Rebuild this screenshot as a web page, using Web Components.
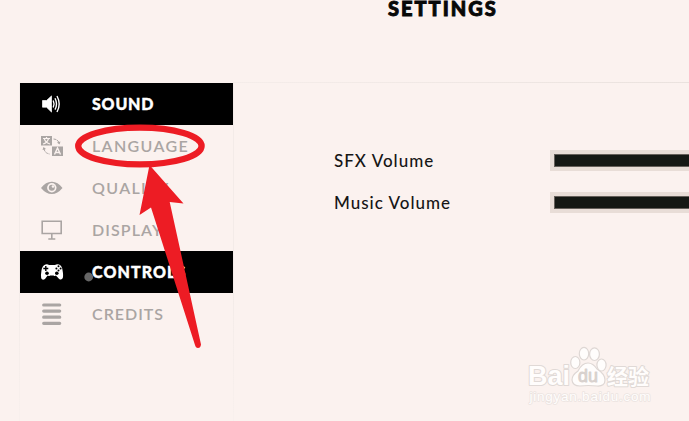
<!DOCTYPE html>
<html lang="en"><head><meta charset="utf-8"><title>Settings</title>
<style>
html,body{margin:0;height:100%;overflow:hidden;background:#fbf2ef}
</style></head><body>
<settings-page></settings-page>
<script>
const ICONS = {
 sound:`<path d="M1.500 6.500h4l5-4.600v16.200l-5-4.900h-4z" fill="currentColor" stroke="currentColor" stroke-width=".7"/><path d="M12.200 6.500q1.700 3.500 0 7M14 4.200q3 5.800 0 11.500M16 2q4.400 8 0 16" fill="none" stroke="currentColor" stroke-width="1.400"/>`,
 language:`<path d="M0 0h11v9.500H0z" fill="currentColor"/><path d="M2 2.500h7M5.500 1v1.500M7.500 2.700Q6 7 2 8M3.300 3Q5 7 9 8" stroke="#fbf2ef" fill="none" stroke-width="1.200"/><path d="M11 10.500h11V20H11z" fill="currentColor"/><path d="M13.500 18.500l3-6.500 3 6.500M14.700 16.500h3.700" stroke="#fbf2ef" fill="none" stroke-width="1.400"/><path d="M12.500 3q4 .3 5.300 3.300M3 12.500q.5 4.500 5.500 5.500" stroke="currentColor" fill="none" stroke-width="1" stroke-dasharray="3 .7"/><path d="M19.500 5.500l-1 3-2.500-2zM1.500 14l1-3 2.500 2z" fill="currentColor"/>`,
 quality:`<path d="M0 10Q5 3.500 10.800 3.700 16.500 3.500 21.500 10 16.500 16 10.800 16 5 16 0 10z" fill="currentColor"/><circle cx="10.800" cy="9.800" r="4.700" fill="#fbf2ef"/><circle cx="10.800" cy="9.800" r="3" fill="currentColor"/><circle cx="12" cy="8.500" r="1.300" fill="#fbf2ef"/>`,
 display:`<path d="M1.200 1.200h19v12.300h-19zM10.800 14v5M7.300 19h7" fill="none" stroke="currentColor" stroke-width="1.600"/>`,
 controls:`<path d="M4.500 2.500Q6.500 1.800 8 3h6Q16 1.800 18 2.600q3 1.300 3.500 5.500 1 5.500.3 8-1.300 2.600-3.900.6l-3-3.100q-1 1-2.300-.2h-3.500q-1.200 1.200-2.500.2L4 16.900q-2.600 1.800-3.800-.6-.6-3 .3-8Q1.200 3.500 4.500 2.500z" fill="currentColor"/><path d="M4.800 4v5M2.300 6.500h5" stroke="#000" stroke-width="1.400"/><circle cx="6" cy="11.200" r="1.800"/><circle cx="15.800" cy="11.200" r="1.800"/><g><circle cx="17.500" cy="4.300" r="1"/><circle cx="17.500" cy="8.500" r="1"/><circle cx="15.400" cy="6.400" r="1"/><circle cx="19.600" cy="6.400" r="1"/></g>`,
 credits:`<path d="M2.700 1h16M2.700 7.100h16M2.700 13.200h16M2.700 19.300h16" stroke="currentColor" stroke-width="3.200" stroke-linecap="round"/>`
};
const define = (name, html, setup) => customElements.define(name, class extends HTMLElement {
  constructor(){ super(); this.attachShadow({mode:'open'}).innerHTML = html; }
  connectedCallback(){ if(setup) setup(this); }
});
define('menu-item', `<style>
:host{display:grid;grid-template-columns:72px 1fr;align-items:center;height:42px;color:#aaa5a3;font:600 16px/20px Lato,sans-serif;letter-spacing:1.35px}
:host([active]){background:#000;color:#fff;font-weight:900;letter-spacing:.9px}
:host([active]) span{-webkit-text-stroke:.4px #fff}
svg{display:block;width:22px;height:21px;margin-left:21px;overflow:visible}
span{white-space:nowrap;display:block}
</style><svg viewBox="0 0 22 21"></svg><span><slot></slot></span>`, e => {
  e.shadowRoot.querySelector('svg').innerHTML = ICONS[e.getAttribute('icon')];
  if(e.hasAttribute('spacing')) e.style.letterSpacing = e.getAttribute('spacing') + 'px';
});
define('side-menu', `<style>
:host{display:block;width:213px;height:338px;position:relative}
:host::before,:host::after{content:"";position:absolute;top:0;bottom:0;width:1px;background:linear-gradient(#f3ebe8 60%,#f8f0ed)}
:host::before{left:-1px}:host::after{right:-1px}
</style><slot></slot>`);
define('volume-row', `<style>
:host{display:grid;grid-template-columns:215.500px 1fr;align-items:center;height:42px;color:#161616;font:500 17px/22px Lato,sans-serif;letter-spacing:1px}
.track{height:21px;background:#e8ddd7;padding:4px 0 4px 4px;box-sizing:border-box;margin-top:-1px}
.fill{height:13px;background:#151814;border:1px solid #655f5a;border-right:0;box-sizing:border-box}
</style><span><slot></slot></span><div class="track"><div class="fill"></div></div>`);
define('site-watermark', `<style>
:host{display:block;position:absolute;left:520px;top:340px;width:140px;height:75px}
svg{display:block}
text{fill:#fffdfc;stroke:#e0d9d6;stroke-width:2px;paint-order:stroke;stroke-linejoin:round}
</style><svg width="140" height="75" viewBox="520 340 140 75">
<text x="528" y="385" font-family="Liberation Sans,sans-serif" font-size="27" font-weight="700" textLength="42" lengthAdjust="spacingAndGlyphs">Bai</text>
<g fill="#fffdfc" stroke="#ded7d4" stroke-width="1.200"><ellipse cx="575.300" cy="362.500" rx="4.600" ry="6"/><ellipse cx="584" cy="353.700" rx="4.700" ry="6.300"/><ellipse cx="594.500" cy="354.200" rx="4.900" ry="6.300"/><ellipse cx="601.500" cy="365" rx="4.600" ry="6"/><path d="M588 363q5 0 9 6 8 5 8 11 0 6.500-8 6-9-1-17 0-7.500 0-8-6 0-5 6-9 4-8 10-8z"/></g>
<text x="578" y="382" font-family="Liberation Sans,sans-serif" font-size="18" textLength="20" lengthAdjust="spacingAndGlyphs" style="fill:#d8d1ce;stroke:#d8d1ce;stroke-width:.9px">du</text>
<text x="607" y="384" font-family="Noto Sans CJK SC,sans-serif" font-size="21" font-weight="700" textLength="42" lengthAdjust="spacingAndGlyphs">经验</text>
<text x="529.500" y="401" font-family="Liberation Sans,sans-serif" font-size="13.500" textLength="121" style="stroke:#ebe4e1;stroke-width:1.600px">jingyan.baidu.com</text></svg>`);
define('callout-overlay', `<style>:host{display:block;position:absolute;inset:0;pointer-events:none}svg{display:block}</style>
<svg width="689" height="421" viewBox="0 0 689 421"><circle cx="88.700" cy="277" r="4.400" fill="#666"/>
<ellipse cx="139.900" cy="146" rx="61.700" ry="18.300" fill="none" stroke="#ed1c24" stroke-width="6.300"/>
<path d="M149.500 165L183.500 203.500 169.700 202 201 344.500Q200.500 348 198 348 195.700 348 195 345L151 207.500 139.500 215z" fill="#ed1c24"/></svg>`);
define('settings-page', `<style>
:host{display:grid;position:relative;width:689px;height:421px;grid-template-columns:213px 1fr;grid-template-rows:83px 338px;padding-left:20px;box-sizing:border-box;overflow:hidden;background:#fbf2ef}
header{grid-column:1/3;padding-left:368px;color:#080808;font:900 20px/16px Lato,sans-serif;letter-spacing:2px;-webkit-text-stroke:.9px #080808}
main{padding:57px 0 0 101px}
main::before{content:"";display:block;height:1px;margin:-58px 0 57px -101px;background:linear-gradient(90deg,#f5edea,#eae2de)}
</style><header>SETTINGS</header>
<side-menu><menu-item icon="sound" active spacing=".8">SOUND</menu-item><menu-item icon="language">LANGUAGE</menu-item><menu-item icon="quality">QUALITY</menu-item><menu-item icon="display" spacing="1.1">DISPLAY</menu-item><menu-item icon="controls" active spacing="1.1">CONTROLS</menu-item><menu-item icon="credits" spacing="1">CREDITS</menu-item></side-menu>
<main><volume-row>SFX Volume</volume-row><volume-row>Music Volume</volume-row></main>
<site-watermark></site-watermark><callout-overlay></callout-overlay>`);
</script></body></html>
